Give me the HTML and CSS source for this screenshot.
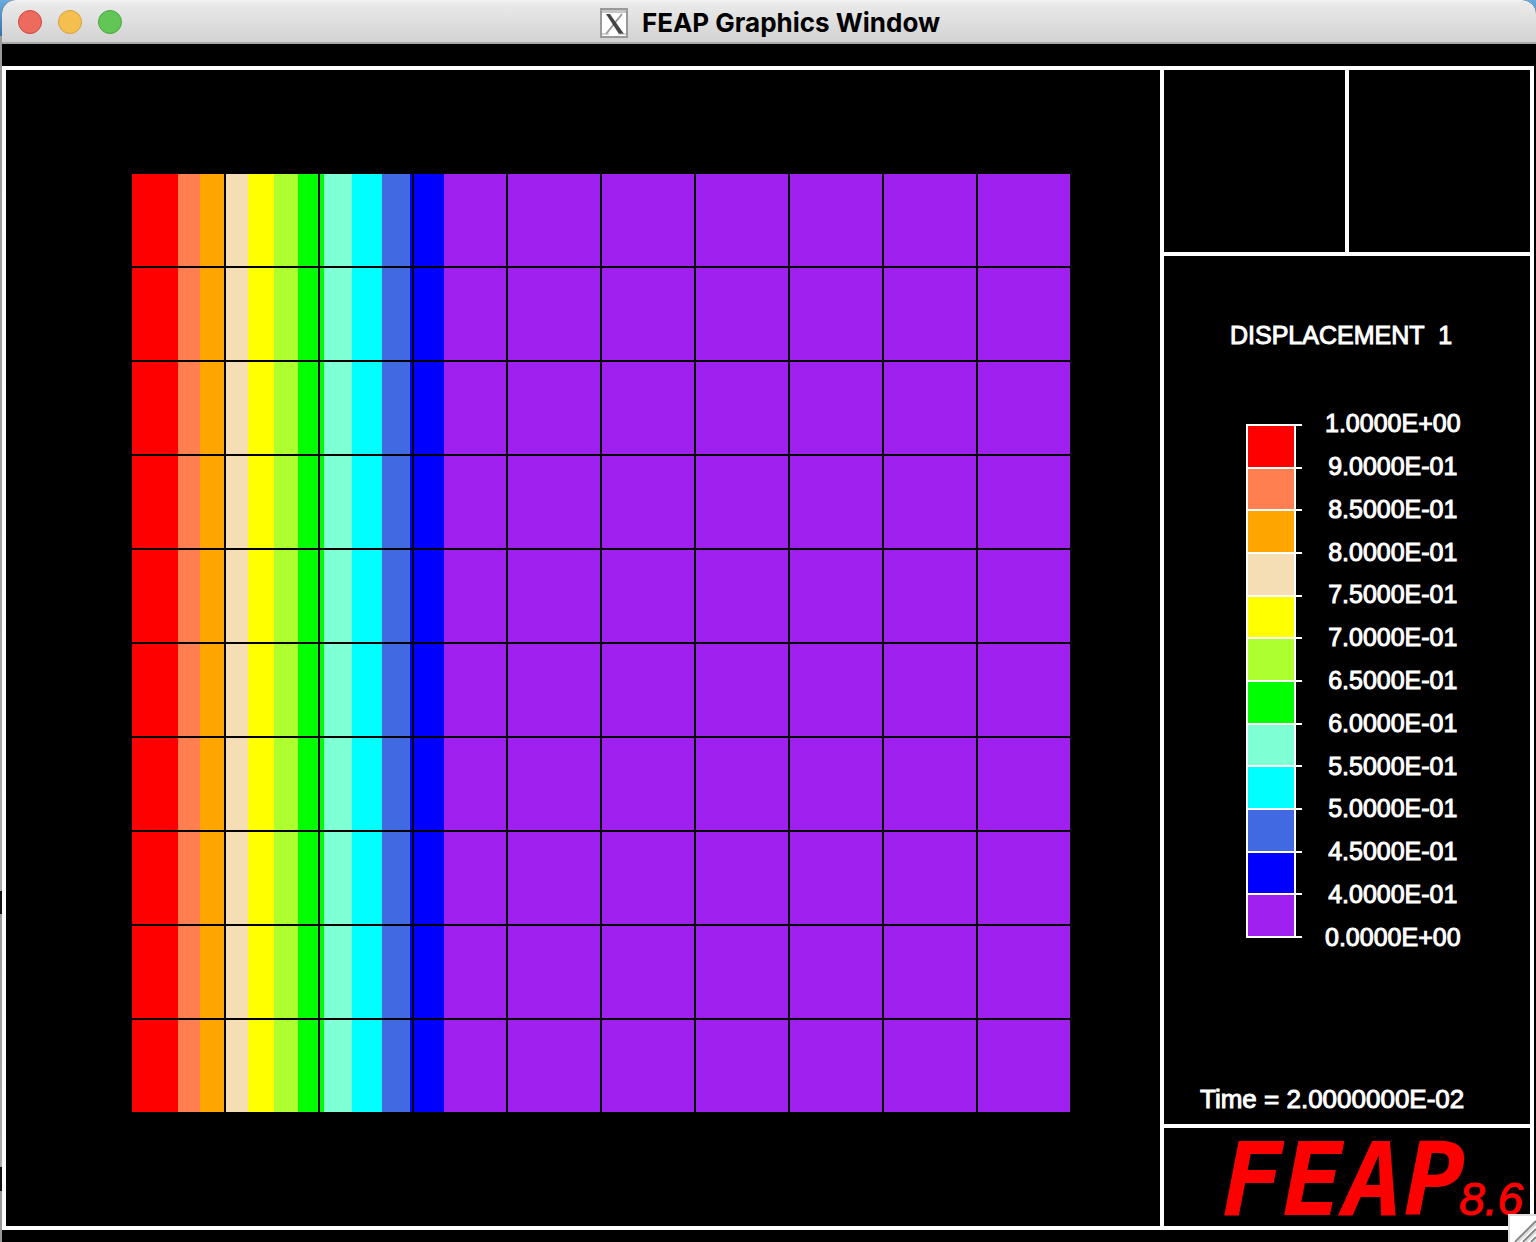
FILE: index.html
```html
<!DOCTYPE html>
<html lang="en">
<head>
<meta charset="utf-8">
<title>FEAP Graphics Window</title>
<link rel="stylesheet" href="styles.css">
</head>
<body>
<div class="window">
  <header class="titlebar">
    <div class="controls">
      <button class="control close" type="button" aria-label="Close"></button>
      <button class="control minimize" type="button" aria-label="Minimize"></button>
      <button class="control maximize" type="button" aria-label="Zoom"></button>
    </div>
    <div class="caption">
      <svg class="app-icon" viewBox="0 0 28 30" aria-hidden="true">
        <rect x="1" y="1" width="26" height="28" fill="#fff" stroke="#999" stroke-width="2"/>
        <path d="M2 2h24v3H2z" fill="#c6c6c6"/>
        <path d="M22 6L6 26" stroke="#999" stroke-width="2"/>
        <path d="M6 6h4l14 20h-5z" fill="#444"/>
        <path d="M2 26h7M18 26h8" stroke="#aaa" stroke-width="1"/>
      </svg>
      <h1 class="title">FEAP Graphics Window</h1>
    </div>
  </header>

  <main class="frame">
    <section class="plot">
      <svg class="mesh" viewBox="0 0 1154 1156" role="img" aria-label="Displacement contours on a 10 by 10 mesh" shape-rendering="crispEdges">
        <g transform="translate(126 104)">
          <rect width="938" height="938" fill="#a020f0"/>
          <rect x="0" width="46" height="938" fill="#ff0000"/>
          <rect x="46" width="22" height="938" fill="#ff7f50"/>
          <rect x="68" width="25" height="938" fill="#ffa500"/>
          <rect x="93" width="23" height="938" fill="#f5deb3"/>
          <rect x="116" width="26" height="938" fill="#ffff00"/>
          <rect x="142" width="24" height="938" fill="#adff2f"/>
          <rect x="166" width="26" height="938" fill="#00ff00"/>
          <rect x="192" width="28" height="938" fill="#7fffd4"/>
          <rect x="220" width="30" height="938" fill="#00ffff"/>
          <rect x="250" width="28" height="938" fill="#4169e1"/>
          <rect x="278" width="34" height="938" fill="#0000ff"/>
          <path d="M93 0v938M187 0v938M281 0v938M375 0v938M469 0v938M563 0v938M657 0v938M751 0v938M845 0v938M0 93h938M0 187h938M0 281h938M0 375h938M0 469h938M0 563h938M0 657h938M0 751h938M0 845h938" stroke="#000" stroke-width="2"/>
        </g>
      </svg>
    </section>

    <aside class="side">
      <div class="views">
        <div class="view"></div>
        <div class="view"></div>
      </div>
      <section class="info">
        <h2 class="quantity">DISPLACEMENT&nbsp; 1</h2>
        <div class="legend">
          <ul class="scale" aria-hidden="true">
            <li class="band red"></li>
            <li class="band coral"></li>
            <li class="band orange"></li>
            <li class="band wheat"></li>
            <li class="band yellow"></li>
            <li class="band lime"></li>
            <li class="band green"></li>
            <li class="band aqua"></li>
            <li class="band cyan"></li>
            <li class="band royal"></li>
            <li class="band blue"></li>
            <li class="band purple"></li>
          </ul>
          <ul class="values">
            <li>1.0000E+00</li>
            <li>9.0000E-01</li>
            <li>8.5000E-01</li>
            <li>8.0000E-01</li>
            <li>7.5000E-01</li>
            <li>7.0000E-01</li>
            <li>6.5000E-01</li>
            <li>6.0000E-01</li>
            <li>5.5000E-01</li>
            <li>5.0000E-01</li>
            <li>4.5000E-01</li>
            <li>4.0000E-01</li>
            <li>0.0000E+00</li>
          </ul>
        </div>
        <p class="time">Time = 2.0000000E-02</p>
      </section>
      <div class="logo"><span class="name">FEAP</span><span class="version">8.6</span></div>
    </aside>
  </main>

  <svg class="grip" viewBox="0 0 28 28" aria-hidden="true">
    <rect width="28" height="28" fill="#ddd"/>
    <rect x="2" y="2" width="26" height="26" fill="#fff"/>
    <path d="M7 28L28 7M15 28L28 15M23 28L28 23" stroke="#888" stroke-width="2"/>
    <path d="M10 28L28 10M18 28L28 18M26 28L28 26" stroke="#ddd" stroke-width="2"/>
  </svg>
</div>
</body>
</html>
```
FILE: styles.css
```css
* {
  box-sizing: border-box;
}

body {
  margin: 0;
  padding-left: 2px;
  background: linear-gradient(#6aaae0, #3a70a8 36px, #999 36px, #aaa 891px, #111 891px, #111 914px, #999 914px, #aaa 1167px, #111 1167px, #111 1191px, #999 1191px);
  color: #fff;
  font-family: "Liberation Sans", Arial, sans-serif;
}

h1, h2, p, ul {
  margin: 0;
  padding: 0;
}

ul {
  list-style: none;
}

.window {
  position: relative;
  display: flex;
  flex-direction: column;
  min-height: 100vh;
  border-radius: 14px 14px 0 0;
  background: #000;
}

/* Title bar */
.titlebar {
  display: grid;
  grid-template-columns: 1fr auto 1fr;
  align-items: center;
  height: 44px;
  padding: 2px 0 0 16px;
  border-bottom: 2px solid #a8a8a8;
  border-radius: 14px 14px 0 0;
  background: linear-gradient(#f4f4f4, #eaeaea 3px, #d2d2d2);
}

.controls {
  display: flex;
  gap: 16px;
}

.control {
  width: 24px;
  height: 24px;
  padding: 0;
  border: 1px solid;
  border-radius: 50%;
}

.close {
  border-color: #d0473e;
  background: #ed6a5f;
}

.minimize {
  border-color: #d8a03c;
  background: #f5bf50;
}

.maximize {
  border-color: #4aa73c;
  background: #62c656;
}

.caption {
  display: flex;
  align-items: center;
  gap: 14px;
  margin-right: 14px;
  padding-top: 2px;
}

.app-icon {
  width: 28px;
  height: 30px;
}

.title {
  color: #000;
  font: 700 26px/30px Inter, sans-serif;
}

/* Drawing area */
.frame {
  flex: 1;
  display: grid;
  grid-template-columns: 1fr 370px;
  margin: 22px 2px 12px 0;
  border: 4px solid #fff;
}

.mesh {
  display: block;
  width: 100%;
  height: 100%;
}

.side {
  display: flex;
  flex-direction: column;
  border-left: 4px solid #fff;
}

.views {
  display: flex;
  height: 186px;
  border-bottom: 4px solid #fff;
}

.view {
  flex: 1;
}

.view + .view {
  border-left: 4px solid #fff;
}

.info {
  flex: 1;
  display: flex;
  flex-direction: column;
  padding: 64px 0 10px;
  font-size: 25px;
  font-weight: 400;
  line-height: 30px;
  -webkit-text-stroke: 1px #fff;
}

.quantity {
  padding-left: 66px;
  font-size: 25px;
  font-weight: 400;
}

.legend {
  display: flex;
  align-items: center;
  gap: 23px;
  height: 556px;
  margin-top: 52px;
  padding-left: 82px;
}

.scale {
  display: flex;
  flex-direction: column;
  width: 56px;
  height: 514px;
  margin-top: 2px;
  border-bottom: 2px solid #fff;
}

.band {
  position: relative;
  flex: 1;
  width: 50px;
  border: 2px solid #fff;
  border-bottom: 0;
}

/* Tick mark beside the upper edge of each band */
.band::after {
  content: "";
  position: absolute;
  top: -2px;
  left: 48px;
  width: 6px;
  height: 2px;
  background: #fff;
}

.red { background: #ff0000; }
.coral { background: #ff7f50; }
.orange { background: #ffa500; }
.wheat { background: #f5deb3; }
.yellow { background: #ffff00; }
.lime { background: #adff2f; }
.green { background: #00ff00; }
.aqua { background: #7fffd4; }
.cyan { background: #00ffff; }
.royal { background: #4169e1; }
.blue { background: #0000ff; }
.purple { background: #a020f0; }

.values {
  display: flex;
  flex-direction: column;
  height: 556px;
}

.values li {
  flex: 1;
  display: flex;
  align-items: center;
  justify-content: center;
}

.time {
  margin-top: auto;
  padding-left: 36px;
  font-size: 26px;
}

.logo {
  display: flex;
  align-items: baseline;
  height: 102px;
  padding-left: 58px;
  border-top: 4px solid #fff;
  color: #f00;
  font-style: italic;
  line-height: 104px;
  white-space: nowrap;
}

.name {
  font-family: "DejaVu Sans Mono", monospace;
  font-size: 101px;
  font-weight: 700;
}

.version {
  margin-left: -6px;
  font-size: 46px;
  -webkit-text-stroke: 1px #f00;
}

.grip {
  position: absolute;
  right: 0;
  bottom: 0;
  width: 28px;
  height: 28px;
}
```
